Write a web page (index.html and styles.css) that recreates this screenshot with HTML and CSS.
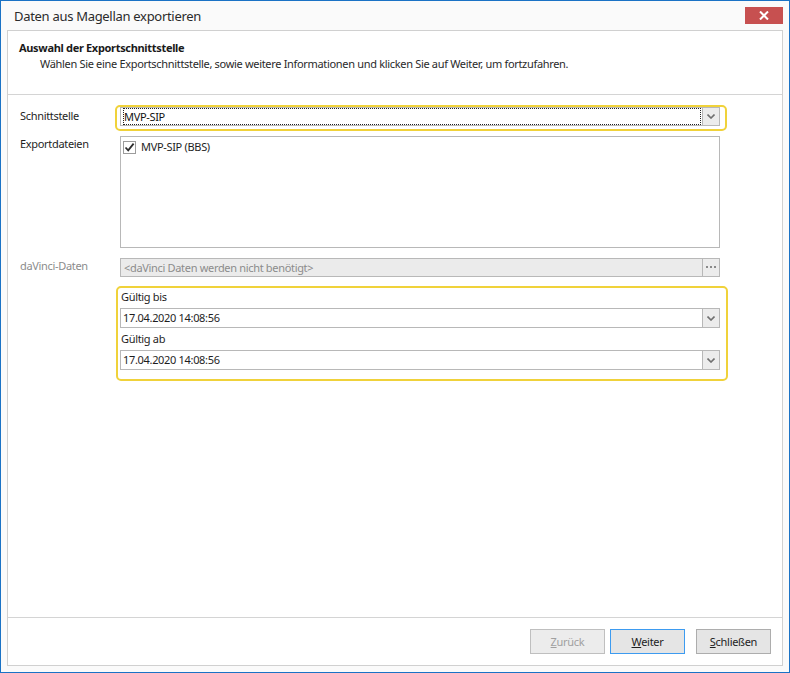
FILE: index.html
```html
<!DOCTYPE html>
<html lang="de">
<head>
<meta charset="utf-8">
<title>Daten aus Magellan exportieren</title>
<link rel="stylesheet" href="styles.css">
</head>
<body>
<div class="window">
  <div class="titlebar">
    <span class="title">Daten aus Magellan exportieren</span>
    <button class="close" aria-label="Schließen">
      <svg width="10" height="9" viewBox="0 0 10 9"><path d="M1 0.5 L9 8.5 M9 0.5 L1 8.5" stroke="#fff" stroke-width="2"/></svg>
    </button>
  </div>
  <div class="panel">
    <div class="header">
      <div class="h-title">Auswahl der Exportschnittstelle</div>
      <div class="h-sub">Wählen Sie eine Exportschnittstelle, sowie weitere Informationen und klicken Sie auf Weiter, um fortzufahren.</div>
    </div>
    <div class="content">
      <div class="row row-combo">
        <div class="label">Schnittstelle</div>
        <div class="control">
          <div class="ring ring-combo"></div>
          <div class="combo">
            <div class="combo-text"><span class="focus">MVP-SIP</span></div>
            <div class="drop"><svg width="8" height="5" viewBox="0 0 8 5"><path d="M0.5 0.5 L4 4 L7.5 0.5" fill="none" stroke="#707070" stroke-width="1.6"/></svg></div>
          </div>
        </div>
      </div>
      <div class="row row-list">
        <div class="label label-list">Exportdateien</div>
        <div class="control">
          <div class="listbox">
            <div class="item">
              <span class="check"><svg width="11" height="11" viewBox="0 0 11 11"><path d="M1.5 5.5 L4.2 8.3 L9.6 1.6" fill="none" stroke="#2e2e2e" stroke-width="1.8"/></svg></span>
              <span>MVP-SIP (BBS)</span>
            </div>
          </div>
        </div>
      </div>
      <div class="row row-davinci">
        <div class="label disabled">daVinci-Daten</div>
        <div class="control">
          <div class="combo combo-disabled">
            <div class="combo-text disabled">&lt;daVinci Daten werden nicht benötigt&gt;</div>
            <div class="drop"><svg width="10" height="3" viewBox="0 0 10 3"><rect x="0" y="0" width="2" height="2" fill="#8a8a8a"/><rect x="4" y="0" width="2" height="2" fill="#8a8a8a"/><rect x="8" y="0" width="2" height="2" fill="#8a8a8a"/></svg></div>
          </div>
        </div>
      </div>
      <div class="row row-group">
        <div class="label"></div>
        <div class="group">
          <div class="g-label">Gültig bis</div>
          <div class="combo date">
            <div class="combo-text">17.04.2020 14:08:56</div>
            <div class="drop"><svg width="8" height="5" viewBox="0 0 8 5"><path d="M0.5 0.5 L4 4 L7.5 0.5" fill="none" stroke="#707070" stroke-width="1.6"/></svg></div>
          </div>
          <div class="g-label g-label2">Gültig ab</div>
          <div class="combo date">
            <div class="combo-text">17.04.2020 14:08:56</div>
            <div class="drop"><svg width="8" height="5" viewBox="0 0 8 5"><path d="M0.5 0.5 L4 4 L7.5 0.5" fill="none" stroke="#707070" stroke-width="1.6"/></svg></div>
          </div>
        </div>
      </div>
    </div>
    <div class="footer">
      <button class="btn btn-disabled"><u>Z</u>urück</button>
      <button class="btn btn-focus"><u>W</u>eiter</button>
      <button class="btn btn-last"><u>S</u>chließen</button>
    </div>
  </div>
</div>
</body>
</html>
```

FILE: styles.css
```css
* { box-sizing: border-box; }
html, body { margin: 0; padding: 0; background: #fff; }
body {
  font-family: "Noto Sans", "Open Sans", sans-serif;
  font-size: 11px;
  letter-spacing: -0.32px;
  color: #1e1e1e;
}
.window {
  width: 790px;
  height: 673px;
  border: 1px solid #1a72c5;
  background: #fafafa;
  padding: 0 6px 6px 6px;
  display: flex;
  flex-direction: column;
}
.titlebar {
  height: 29px;
  display: flex;
  align-items: flex-start;
  justify-content: space-between;
}
.title {
  font-family: "Noto Sans", sans-serif;
  font-size: 13px;
  letter-spacing: -0.3px;
  color: #2b2b2b;
  margin: 5px 0 0 7px;
  line-height: 20px;
}
.close {
  width: 38px;
  height: 17px;
  margin-top: 6px;
  border: 0;
  padding: 0;
  background: #c75050;
  display: flex;
  align-items: center;
  justify-content: center;
}
.panel {
  flex: 1;
  border: 1px solid #d0d0d0;
  background: #fff;
  display: flex;
  flex-direction: column;
}
.header {
  height: 64px;
  border-bottom: 1px solid #d4d4d4;
  padding: 10px 0 0 11px;
}
.h-title {
  font-weight: bold;
  line-height: 14px;
  color: #1a1a1a;
}
.h-sub {
  line-height: 14px;
  margin-top: 2px;
  padding-left: 21px;
  color: #2a2a2a;
}
.content {
  flex: 1;
  padding: 12px 0 0 12px;
}
.row {
  display: flex;
}
.label {
  width: 100px;
  flex: none;
  line-height: 14px;
  padding-top: 2px;
}
.label-list { padding-top: 1px; }
.disabled { color: #8c8c8c; }
.control {
  position: relative;
  width: 600px;
}
.ring {
  position: absolute;
  border: 2px solid #f0d23a;
  border-radius: 5px;
  pointer-events: none;
}
.ring-combo {
  left: -5px;
  top: -2px;
  right: -7px;
  bottom: -5px;
}
.combo {
  height: 19px;
  border: 1px solid #b8b8b8;
  background: #fff;
  display: flex;
}
.combo-text {
  flex: 1;
  padding-left: 2px;
  line-height: 17px;
  white-space: nowrap;
  overflow: hidden;
}
.focus {
  display: block;
  height: 17px;
  border: 1px dotted #222;
  margin-right: 1px;
  line-height: 15px;
  padding-left: 0;
  color: #111;
}
.drop {
  width: 17px;
  flex: none;
  border-left: 1px solid #b8b8b8;
  background: #ececec;
  display: flex;
  align-items: center;
  justify-content: center;
}
.combo-disabled { background: #ebebeb; }
.combo-disabled .combo-text { padding-left: 3px; }
.row-list { margin-top: 10px; }
.listbox {
  height: 112px;
  border: 1px solid #b8b8b8;
  background: #fff;
  padding: 3px 0 0 2px;
}
.item {
  display: flex;
  align-items: center;
  gap: 5px;
  line-height: 14px;
}
.check {
  width: 13px;
  height: 13px;
  border: 1px solid #9c9c9c;
  background: #fff;
  display: flex;
  align-items: center;
  justify-content: center;
}
.row-davinci { margin-top: 10px; }
.row-davinci .label { padding-top: 1px; }
.row-group { margin-top: 9px; }
.group {
  width: 612px;
  margin-left: -4px;
  border: 2px solid #f0d23a;
  border-radius: 5px;
  padding: 2px 6px 9px 2px;
}
.g-label {
  line-height: 14px;
  padding-left: 1px;
  margin-bottom: 4px;
}
.g-label2 { margin-top: 4px; }
.date { height: 20px; }
.date .combo-text { line-height: 18px; padding-left: 2px; }
.footer {
  height: 48px;
  border-top: 1px solid #d4d4d4;
  display: flex;
  justify-content: flex-end;
  align-items: flex-start;
  padding: 11px 11px 0 0;
}
.btn {
  width: 75px;
  height: 25px;
  margin-left: 5px;
  border: 1px solid #adadad;
  background: #e5e5e5;
  font-family: "Noto Sans", "Open Sans", sans-serif;
  font-size: 11px;
  letter-spacing: -0.3px;
  color: #1e1e1e;
  padding: 0;
}
.btn-disabled {
  color: #a0a0a0;
  border-color: #bfbfbf;
  background: #ececec;
}
.btn-focus {
  border-color: #3d9bf0;
  background: #e5e5e5;
}
.btn-last { margin-left: 11px; }
```
